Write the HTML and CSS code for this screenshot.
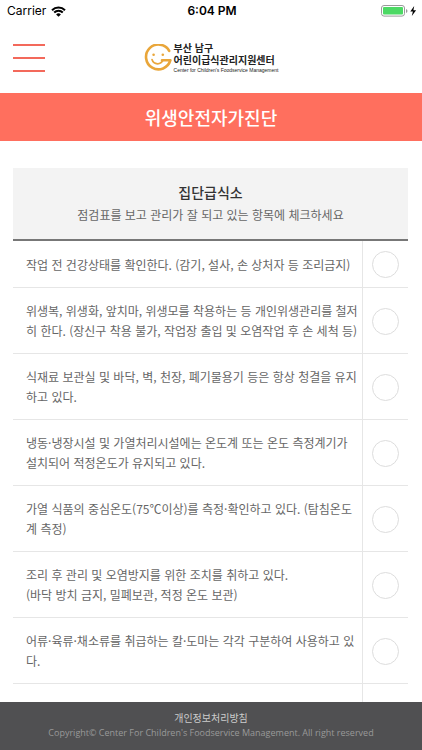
FILE: index.html
```html
<!DOCTYPE html>
<html lang="ko">
<head>
    <meta charset="utf-8">
    <meta name="viewport" content="width=device-width, initial-scale=1">
    <title>위생안전자가진단</title>
    <link rel="stylesheet" href="styles.css">
</head>

<body>
    <!-- 상태바 -->
    <div class="status">
        <div class="status-left">
            <span>Carrier</span>
            <svg class="wifi" width="15" height="11" viewBox="0 0 15 11">
                <path d="M1 4.2a9.2 9.2 0 0 1 13 0M3.2 6.5a6 6 0 0 1 8.6 0" fill="none" stroke="#000" stroke-width="2"/>
                <path d="M7.5 10.8L5.1 8.4a3.4 3.4 0 0 1 4.8 0z"/>
            </svg>
        </div>
        <div class="status-time">6:04 PM</div>
        <div class="status-right">
            <svg width="36" height="12" viewBox="0 0 36 12">
                <rect x=".5" y=".5" width="23" height="10.6" rx="2.5" fill="#fff" stroke="#9a9a9a"/>
                <rect x="2" y="2" width="20" height="7.6" rx="1" fill="#4cd964"/>
                <path d="M25 4v4q1.5-.5 1.5-2T25 4z" fill="#9a9a9a"/>
                <path d="M33.2 1L29.3 6.4h2.6L30.8 11l4.3-5.8h-2.7z"/>
            </svg>
        </div>
    </div>

    <!-- 헤더 -->
    <header class="header">
        <button class="menu" type="button" aria-label="메뉴">
            <span></span>
            <span></span>
            <span></span>
        </button>
        <a class="logo" href="#">
            <svg width="28" height="28" viewBox="0 0 28 28">
                <path d="M25.2 6.8A12.4 12.4 0 1 0 26.4 16.2H18" fill="none" stroke="#e9a63a" stroke-width="2.6" stroke-linecap="round" stroke-linejoin="round"/>
                <path d="M8 15.6q1.2 4.2 5.6 4.2 3.8 0 5.4-3.6" fill="none" stroke="#e9a63a" stroke-width="1.7" stroke-linecap="round"/>
                <circle cx="9.6" cy="10.8" r="1.3" fill="#e9a63a"/>
                <circle cx="18.8" cy="10.8" r="1.3" fill="#e9a63a"/>
            </svg>
            <span class="logo-text">
                <b>부산 남구</b>
                <b>어린이급식관리지원센터</b>
                <small>Center for Children's Foodservice Management</small>
            </span>
        </a>
    </header>

    <h1 class="title">위생안전자가진단</h1>

    <!-- 점검표 -->
    <main class="content">
        <div class="check-head">
            <h2>집단급식소</h2>
            <p>점검표를 보고 관리가 잘 되고 있는 항목에 체크하세요</p>
        </div>
        <table class="check-list">
            <tr>
                <td class="text"><label for="chk1">작업 전 건강상태를 확인한다. (감기, 설사, 손 상처자 등 조리금지)</label></td>
                <td class="check"><input type="checkbox" id="chk1"></td>
            </tr>
            <tr>
                <td class="text"><label for="chk2">위생복, 위생화, 앞치마, 위생모를 착용하는 등 개인위생관리를 철저히 한다. (장신구 착용 불가, 작업장 출입 및 오염작업 후 손 세척 등)</label></td>
                <td class="check"><input type="checkbox" id="chk2"></td>
            </tr>
            <tr>
                <td class="text"><label for="chk3">식재료 보관실 및 바닥, 벽, 천장, 폐기물용기 등은 항상 청결을 유지하고 있다.</label></td>
                <td class="check"><input type="checkbox" id="chk3"></td>
            </tr>
            <tr>
                <td class="text"><label for="chk4">냉동·냉장시설 및 가열처리시설에는 온도계 또는 온도 측정계기가 설치되어 적정온도가 유지되고 있다.</label></td>
                <td class="check"><input type="checkbox" id="chk4"></td>
            </tr>
            <tr>
                <td class="text"><label for="chk5">가열 식품의 중심온도(75℃이상)를 측정·확인하고 있다. (탐침온도계 측정)</label></td>
                <td class="check"><input type="checkbox" id="chk5"></td>
            </tr>
            <tr>
                <td class="text"><label for="chk6">조리 후 관리 및 오염방지를 위한 조치를 취하고 있다.<br>(바닥 방치 금지, 밀폐보관, 적정 온도 보관)</label></td>
                <td class="check"><input type="checkbox" id="chk6"></td>
            </tr>
            <tr>
                <td class="text"><label for="chk7">어류·육류·채소류를 취급하는 칼·도마는 각각 구분하여 사용하고 있다.</label></td>
                <td class="check"><input type="checkbox" id="chk7"></td>
            </tr>
            <tr>
                <td class="text"></td>
                <td class="check"></td>
            </tr>
        </table>
    </main>

    <footer class="footer">
        <a href="#">개인정보처리방침</a>
        <p>Copyright© Center For Children's Foodservice Management. All right reserved</p>
    </footer>
</body>

</html>
```
FILE: styles.css
```css
html, body{
    margin: 0;
    padding: 0;
    height: 100%;
}
body{
    display: flex;
    flex-direction: column;
    overflow: hidden;
    background: #fff;
    color: #666;
    font-family: "Noto Sans CJK KR", sans-serif;
    font-size: 12px;
    line-height: 20px;
}
h1, h2, p{
    margin: 0;
}
a{
    color: inherit;
    text-decoration: none;
}

/* 상태바 */
.status{
    flex: none;
    display: grid;
    grid-template-columns: 1fr auto 1fr;
    align-items: center;
    height: 22px;
    padding: 0 5px 0 7px;
    color: #000;
    font-family: Inter, sans-serif;
    font-size: 12px;
}
.status-left{
    display: flex;
    align-items: center;
    gap: 5px;
}
.status-time{
    font-weight: 600;
}
.status-right{
    display: flex;
    justify-content: flex-end;
}

/* 헤더 */
.header{
    flex: none;
    display: grid;
    grid-template-columns: 1fr auto 1fr;
    align-items: center;
    height: 71px;
    padding: 0 13px;
}
.menu{
    display: flex;
    flex-direction: column;
    justify-content: space-between;
    width: 32px;
    height: 28px;
    padding: 0;
    border: 0;
    background: none;
}
.menu span{
    height: 2px;
    background: #f3695b;
}
.logo{
    display: flex;
    align-items: center;
    gap: 2px;
    color: #222;
}
.logo-text{
    display: flex;
    flex-direction: column;
}
.logo-text b{
    font-size: 10px;
    line-height: 12px;
}
.logo-text small{
    font-family: "Liberation Sans", sans-serif;
    font-size: 5px;
    line-height: 8px;
}

.title{
    flex: none;
    background: #ff6f5e;
    color: #fff;
    font-size: 18px;
    font-weight: 500;
    line-height: 48px;
    text-align: center;
}

/* 점검표 */
.content{
    flex: 1;
    min-height: 0;
    overflow: hidden;
    padding: 27px 14px 0 13px;
}
.check-head{
    padding: 14px 0 13px;
    border-bottom: 2px solid #777;
    background: #f3f3f3;
    text-align: center;
}
.check-head h2{
    color: #333;
    font-size: 14px;
    font-weight: 500;
    line-height: 20px;
}
.check-head p{
    line-height: 26px;
    margin-bottom: -2px;
}
.check-list{
    width: 100%;
    border-collapse: separate;
    border-spacing: 0;
}
.check-list td{
    border-bottom: 1px solid #e6e6e6;
    vertical-align: middle;
}
.check-list .text{
    height: 20px;
    padding: 13px 3px 12px 13px;
    word-break: break-all;
}
.check-list .check{
    width: 27px;
    padding: 10px 9px 9px;
    border-left: 1px solid #e6e6e6;
}
.check input{
    appearance: none;
    display: block;
    box-sizing: border-box;
    width: 27px;
    height: 27px;
    margin: 0;
    border: 1px solid #ddd;
    border-radius: 50%;
    background: #fff;
}
.check input:checked{
    background: #ff6f5e;
}

.footer{
    flex: none;
    padding: 8px 0 10px;
    background: #505052;
    color: #ccc;
    font-size: 10px;
    line-height: 15px;
    text-align: center;
}
.footer a{
    display: block;
}
.footer p{
    color: #999;
    font-family: "Open Sans", sans-serif;
    font-size: 9px;
}
```
